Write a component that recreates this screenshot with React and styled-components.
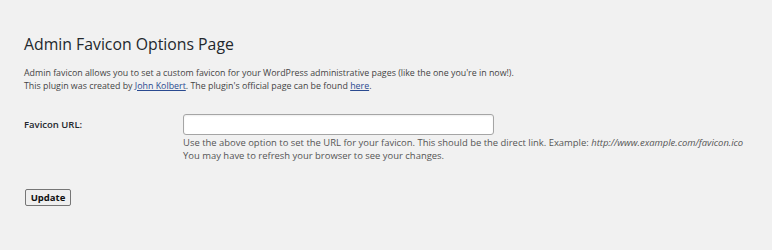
import React from 'react'
import styled, { createGlobalStyle } from 'styled-components'

const GlobalStyle = createGlobalStyle`
    html, body {
        margin: 0;
        padding: 0;
        background: #f1f1f1;
    }
    body {
        font-family: "Open Sans", "Noto Sans", sans-serif;
        color: #444;
    }
`

const Wrap = styled.div`
    padding: 32px 24px 0 24px;
`

const Title = styled.h1`
    margin: 0 0 11px 0;
    font-size: 15.8px;
    font-weight: 400;
    line-height: 24px;
    color: #23282d;
`

const Intro = styled.p`
    margin: 0;
    font-size: 8.85px;
    line-height: 13px;

    a {
        color: #2a4a90;
        text-decoration: underline;
    }
`

const FormRow = styled.div`
    display: grid;
    grid-template-columns: 159px 1fr;
    margin-top: 21px;
`

const Label = styled.label`
    font-size: 9.5px;
    font-weight: 600;
    line-height: 21px;
    color: #23282d;
`

const Field = styled.div`
    display: flex;
    flex-direction: column;
`

const UrlInput = styled.input`
    box-sizing: border-box;
    width: 311px;
    height: 21px;
    margin: 0;
    border: 1px solid #a5a5a5;
    border-radius: 3px;
    background: #fff;
    box-shadow: inset 0 1px 2px rgba(0, 0, 0, 0.07);
    outline: none;
`

const Desc = styled.p`
    margin: 1px 0 0 0;
    font-size: 9.45px;
    line-height: 13px;
    color: #555;
    white-space: nowrap;

    em {
        font-style: italic;
    }
`

const Actions = styled.div`
    margin-top: 22px;
`

const Button = styled.button`
    box-sizing: border-box;
    width: 46px;
    height: 17px;
    margin-left: 1px;
    padding: 0;
    border: 1px solid #767676;
    border-radius: 2px;
    background: #efefef;
    font-family: "Open Sans", "Noto Sans", sans-serif;
    font-size: 9.5px;
    font-weight: 700;
    color: #111;
    line-height: 15px;
`

export default function App() {
    return (
        <Wrap>
            <GlobalStyle />
            <Title>Admin Favicon Options Page</Title>
            <Intro>
                Admin favicon allows you to set a custom favicon for your WordPress administrative pages (like the one you're in now!).
                <br />
                This plugin was created by <a href="#">John Kolbert</a>. The plugin's official page can be found <a href="#">here</a>.
            </Intro>
            <FormRow>
                <Label htmlFor="favicon">Favicon URL:</Label>
                <Field>
                    <UrlInput id="favicon" type="text" />
                    <Desc>
                        Use the above option to set the URL for your favicon. This should be the direct link. Example: <em>http://www.example.com/favicon.ico</em>
                        <br />
                        You may have to refresh your browser to see your changes.
                    </Desc>
                </Field>
            </FormRow>
            <Actions>
                <Button>Update</Button>
            </Actions>
        </Wrap>
    )
}
